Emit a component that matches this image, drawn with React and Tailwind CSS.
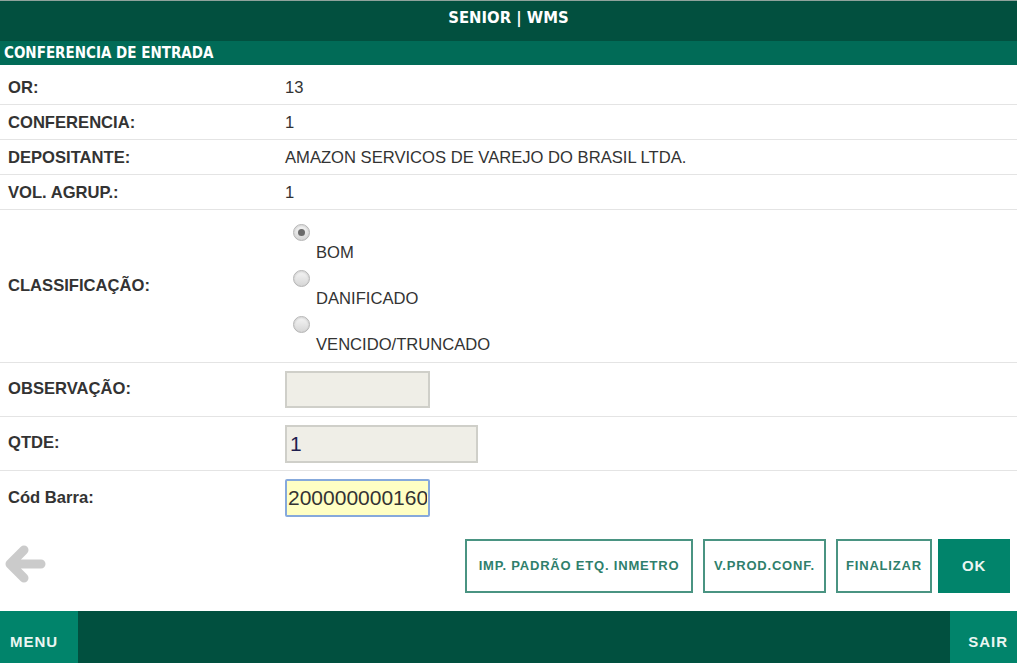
import React, { useState } from "react";

const condensed = {
  fontFamily: '"DejaVu Sans Condensed", "Liberation Sans Narrow", "DejaVu Sans", sans-serif',
  fontStretch: "condensed",
};

const infoRows = [
  { label: "OR:", value: "13" },
  { label: "CONFERENCIA:", value: "1" },
  { label: "DEPOSITANTE:", value: "AMAZON SERVICOS DE VAREJO DO BRASIL LTDA." },
  { label: "VOL. AGRUP.:", value: "1" },
];

const options = ["BOM", "DANIFICADO", "VENCIDO/TRUNCADO"];

const Radio = ({ checked }) => (
  <span className="flex h-[17px] w-[17px] shrink-0 items-center justify-center rounded-full border border-[#b4b4b4] bg-gradient-to-b from-[#f6f6f6] to-[#d6d6d6] shadow-[inset_0_1px_2px_rgba(0,0,0,0.15)]">
    {checked && <span className="h-[7px] w-[7px] rounded-full bg-[#6a6a6a]" />}
  </span>
);

export default function App() {
  const [classificacao, setClassificacao] = useState("BOM");
  const [qtde, setQtde] = useState("1");
  const [codBarra, setCodBarra] = useState("2000000001601");

  return (
    <div
      className="flex h-[663px] w-[1017px] flex-col bg-white text-[#333]"
      style={{ fontFamily: '"Liberation Sans", Arial, sans-serif' }}
    >
      {/* Top bar */}
      <div className="flex h-[41px] shrink-0 items-center justify-center border-t border-[#8fa39c] bg-[#02503f] pb-[6px]">
        <span className="text-[16.5px] font-bold text-white" style={condensed}>
          SENIOR | WMS
        </span>
      </div>
      <div className="flex h-[24px] shrink-0 items-center bg-[#016b57] pl-[4px]">
        <span className="text-[15px] font-bold text-white" style={condensed}>
          CONFERENCIA DE ENTRADA
        </span>
      </div>

      {/* Form */}
      <div className="pt-[5px] text-[16.6px]">
        {infoRows.map((r) => (
          <div
            key={r.label}
            className="grid h-[35px] grid-cols-[285px_1fr] items-center border-b border-[#e4e4e4] pt-[3px]"
          >
            <span className="pl-[8px] font-bold">{r.label}</span>
            <span>{r.value}</span>
          </div>
        ))}

        <div className="grid h-[153px] grid-cols-[285px_1fr] items-center border-b border-[#e4e4e4]">
          <span className="pl-[8px] font-bold">CLASSIFICAÇÃO:</span>
          <div className="flex flex-col pl-[8px] pt-[1px]">
            {options.map((o, i) => (
              <label
                key={o}
                onClick={() => setClassificacao(o)}
                className={`flex cursor-pointer items-start ${i < options.length - 1 ? "h-[46px]" : "h-[33px]"}`}
              >
                <Radio checked={classificacao === o} />
                <span className="ml-[6px] mt-[17px]">{o}</span>
              </label>
            ))}
          </div>
        </div>

        <div className="grid h-[54px] grid-cols-[285px_1fr] items-center border-b border-[#e4e4e4]">
          <span className="pl-[8px] font-bold">OBSERVAÇÃO:</span>
          <input className="h-[37px] w-[145px] border-2 border-[#cfcfc9] bg-[#efeee7] px-1 text-[21px] outline-none" />
        </div>

        <div className="grid h-[54px] grid-cols-[285px_1fr] items-center border-b border-[#e4e4e4]">
          <span className="pl-[8px] font-bold">QTDE:</span>
          <input
            value={qtde}
            onChange={(e) => setQtde(e.target.value)}
            className="h-[38px] w-[193px] border-2 border-[#cfcfc9] bg-[#efeee7] px-[3px] text-[21px] text-[#1f1f4f] outline-none"
          />
        </div>

        <div className="grid h-[54px] grid-cols-[285px_1fr] items-center">
          <span className="pl-[8px] font-bold">Cód Barra:</span>
          <input
            value={codBarra}
            onChange={(e) => setCodBarra(e.target.value)}
            className="h-[38px] w-[145px] rounded-[2px] border-2 border-[#86a9dc] bg-[#ffffc4] px-[1px] text-[21px] text-[#333] outline-none"
          />
        </div>
      </div>

      {/* Actions */}
      <div className="flex flex-1 items-start justify-between pt-[14px] pr-[7px]">
        <button className="ml-[2px] mt-[2px] h-[46px] w-[45px]">
          <svg viewBox="0 0 45 46" width="45" height="46">
            <path
              d="M39 23H9M22 9L8 23l14 14"
              fill="none"
              stroke="#cbcbcb"
              strokeWidth="9"
              strokeLinecap="round"
              strokeLinejoin="round"
            />
          </svg>
        </button>
        <div className="flex h-[54px] items-stretch text-[13px] font-bold tracking-[0.8px]">
          <button className="w-[228px] border-2 border-[#4a9482] text-[#2f7f6c]">
            IMP. PADRÃO ETQ. INMETRO
          </button>
          <button className="ml-[10px] w-[123px] border-2 border-[#4a9482] text-[#2f7f6c]">
            V.PROD.CONF.
          </button>
          <button className="ml-[10px] w-[96px] border-2 border-[#4a9482] text-[#2f7f6c]">
            FINALIZAR
          </button>
          <button className="ml-[6px] w-[72px] bg-[#01846b] text-[15px] text-[#eaf6f2]">
            OK
          </button>
        </div>
      </div>

      {/* Footer */}
      <div className="flex h-[52px] shrink-0 justify-between bg-[#01503f] text-[15px] font-bold tracking-[1px] text-[#eaf6f2]">
        <button className="flex w-[78px] items-center bg-[#01846b] pl-[10px] pt-[10px]">MENU</button>
        <button className="flex w-[67px] items-center justify-end bg-[#01846b] pr-[9px] pt-[10px]">SAIR</button>
      </div>
    </div>
  );
}
